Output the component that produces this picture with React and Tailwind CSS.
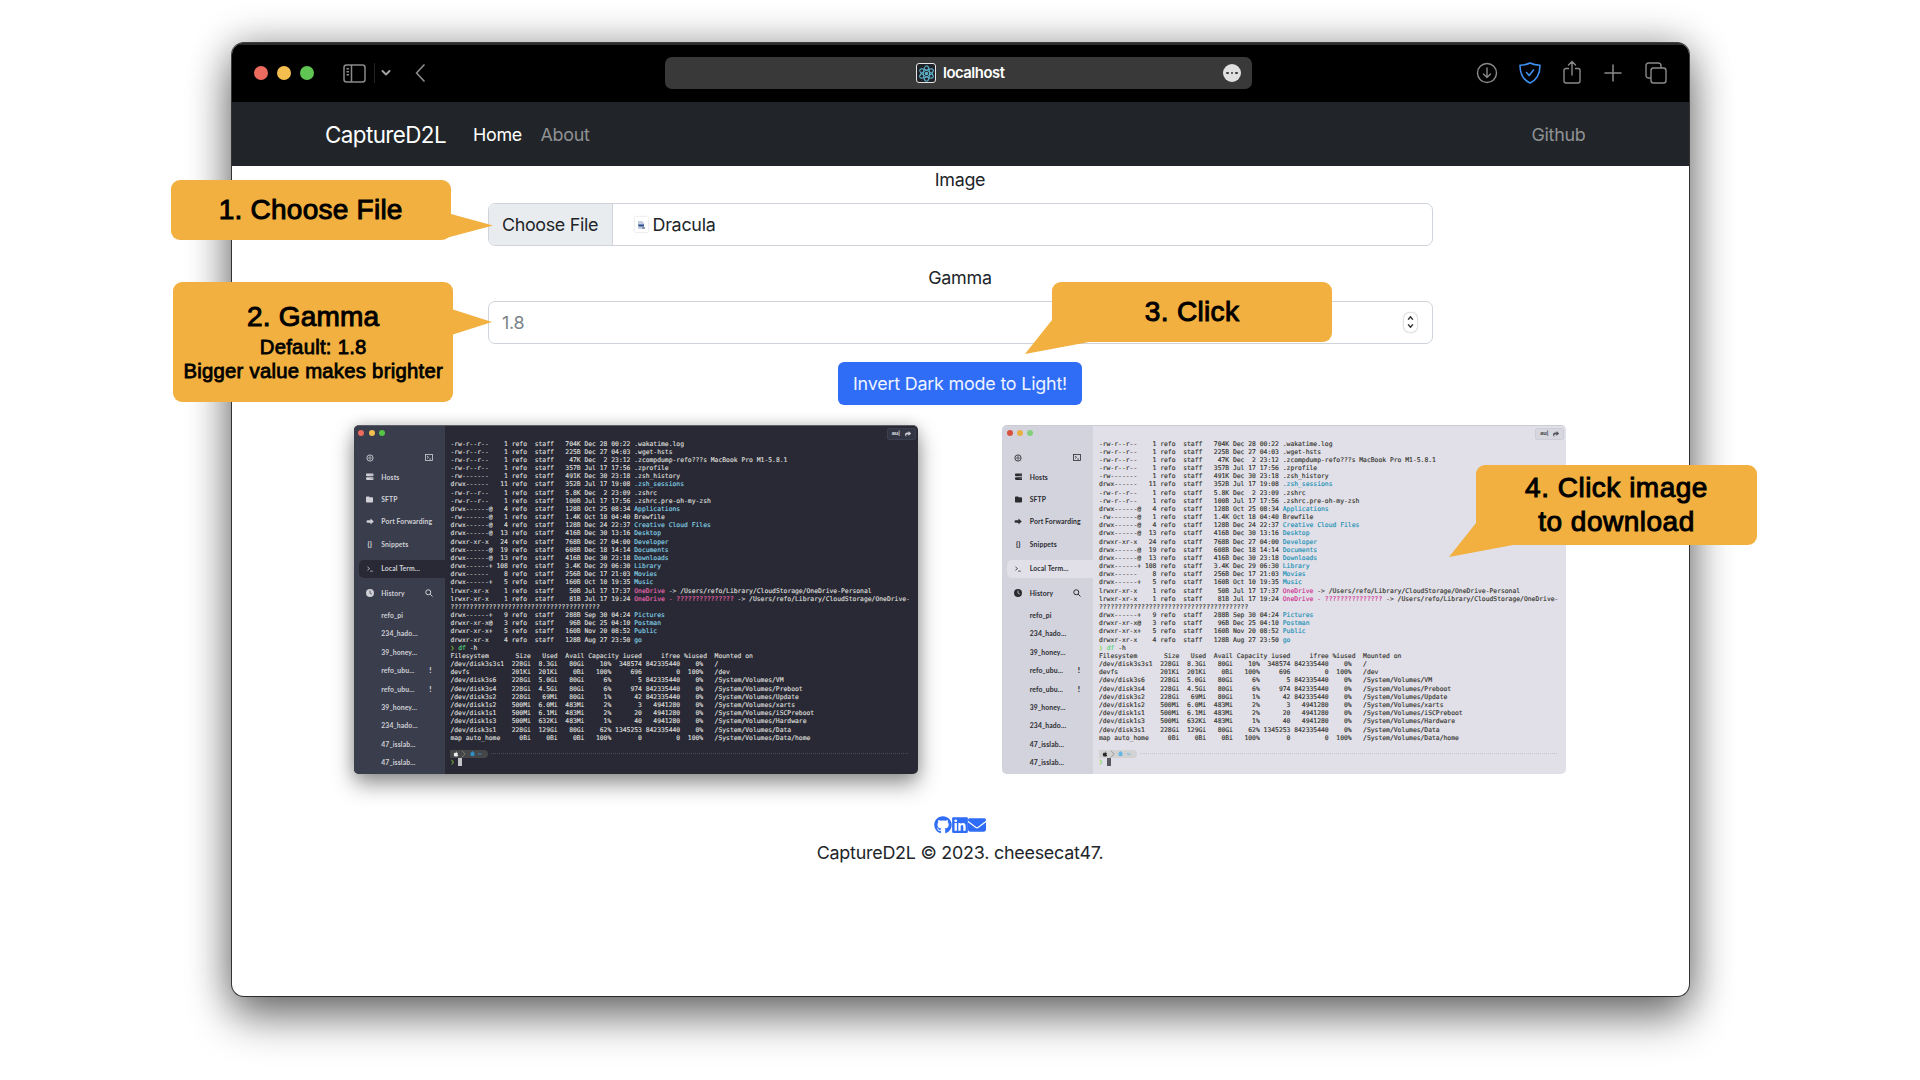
import React from "react";
import { FaGithub, FaLinkedin, FaEnvelope, FaApple, FaServer, FaFolder, FaShare, FaClock } from "react-icons/fa6";

const FILES = [
  ["-rw-r--r--    1 refo  staff   704K Dec 28 00:22 ", ".wakatime.log", "f"],
  ["-rw-r--r--    1 refo  staff   225B Dec 27 04:03 ", ".wget-hsts", "f"],
  ["-rw-r--r--    1 refo  staff    47K Dec  2 23:12 ", ".zcompdump-refo???s MacBook Pro M1-5.8.1", "f"],
  ["-rw-r--r--    1 refo  staff   357B Jul 17 17:56 ", ".zprofile", "f"],
  ["-rw-------    1 refo  staff   491K Dec 30 23:18 ", ".zsh_history", "f"],
  ["drwx------   11 refo  staff   352B Jul 17 19:08 ", ".zsh_sessions", "d"],
  ["-rw-r--r--    1 refo  staff   5.8K Dec  2 23:09 ", ".zshrc", "f"],
  ["-rw-r--r--    1 refo  staff   100B Jul 17 17:56 ", ".zshrc.pre-oh-my-zsh", "f"],
  ["drwx------@   4 refo  staff   128B Oct 25 08:34 ", "Applications", "d"],
  ["-rw-------@   1 refo  staff   1.4K Oct 18 04:40 ", "Brewfile", "f"],
  ["drwx------@   4 refo  staff   128B Dec 24 22:37 ", "Creative Cloud Files", "d"],
  ["drwx------@  13 refo  staff   416B Dec 30 13:16 ", "Desktop", "d"],
  ["drwxr-xr-x   24 refo  staff   768B Dec 27 04:00 ", "Developer", "d"],
  ["drwx------@  19 refo  staff   608B Dec 18 14:14 ", "Documents", "d"],
  ["drwx------@  13 refo  staff   416B Dec 30 23:18 ", "Downloads", "d"],
  ["drwx------+ 108 refo  staff   3.4K Dec 29 06:30 ", "Library", "d"],
  ["drwx------    8 refo  staff   256B Dec 17 21:03 ", "Movies", "d"],
  ["drwx------+   5 refo  staff   160B Oct 10 19:35 ", "Music", "d"],
  ["lrwxr-xr-x    1 refo  staff    50B Jul 17 17:37 ", "OneDrive", "l", " -> /Users/refo/Library/CloudStorage/OneDrive-Personal"],
  ["lrwxr-xr-x    1 refo  staff    81B Jul 17 19:24 ", "OneDrive - ???????????????", "l", " -> /Users/refo/Library/CloudStorage/OneDrive-"],
  ["???????????????????????????????????????", "", "f"],
  ["drwx------+   9 refo  staff   288B Sep 30 04:24 ", "Pictures", "d"],
  ["drwxr-xr-x@   3 refo  staff    96B Dec 25 04:10 ", "Postman", "d"],
  ["drwxr-xr-x+   5 refo  staff   160B Nov 20 08:52 ", "Public", "d"],
  ["drwxr-xr-x    4 refo  staff   128B Aug 27 23:50 ", "go", "d"],
];

const DISKS = [
  ["Filesystem", "Size", "Used", "Avail", "Capacity", "iused", "ifree", "%iused", "Mounted on"],
  ["/dev/disk3s3s1", "228Gi", "8.3Gi", "80Gi", "10%", "348574", "842335440", "0%", "/"],
  ["devfs", "201Ki", "201Ki", "0Bi", "100%", "696", "0", "100%", "/dev"],
  ["/dev/disk3s6", "228Gi", "5.0Gi", "80Gi", "6%", "5", "842335440", "0%", "/System/Volumes/VM"],
  ["/dev/disk3s4", "228Gi", "4.5Gi", "80Gi", "6%", "974", "842335440", "0%", "/System/Volumes/Preboot"],
  ["/dev/disk3s2", "228Gi", "69Mi", "80Gi", "1%", "42", "842335440", "0%", "/System/Volumes/Update"],
  ["/dev/disk1s2", "500Mi", "6.0Mi", "483Mi", "2%", "3", "4941280", "0%", "/System/Volumes/xarts"],
  ["/dev/disk1s1", "500Mi", "6.1Mi", "483Mi", "2%", "20", "4941280", "0%", "/System/Volumes/iSCPreboot"],
  ["/dev/disk1s3", "500Mi", "632Ki", "483Mi", "1%", "40", "4941280", "0%", "/System/Volumes/Hardware"],
  ["/dev/disk3s1", "228Gi", "129Gi", "80Gi", "62%", "1345253", "842335440", "0%", "/System/Volumes/Data"],
  ["map auto_home", "0Bi", "0Bi", "0Bi", "100%", "0", "0", "100%", "/System/Volumes/Data/home"],
];

function diskLine(row, i) {
  const [fs, size, used, avail, cap, iused, ifree, pct, mount] = row;
  const head = i === 0;
  const capCol = head ? " " + cap : cap.padStart(7);
  const pctCol = head ? " " + pct : pct.padStart(6) + " ";
  return (
    fs.padEnd(14) + size.padStart(7) + used.padStart(7) + avail.padStart(7) + capCol +
    iused.padStart(50 - 35 - capCol.length) + ifree.padStart(10) + pctCol + "  " + mount
  );
}

const DARK = {
  frame: "bg-[#282934] border-[#5b5c66] shadow-[0_10px_22px_rgba(0,0,0,0.42),0_0_14px_rgba(0,0,0,0.14)]",
  side: "bg-[#3a3d4c] text-[#cfd0d6]",
  active: "bg-[#282934]",
  text: "text-[#dcdcd8]",
  d: "text-[#84cfe2]",
  l: "text-[#e468b0]",
  f: "",
  cmd: "text-[#4fd07a]",
  arrow: "text-[#6fa83a]",
  pill: "bg-[#454648]",
  pillText: "text-[#2f8fc4]",
  apple: "text-[#eeeeee]",
  dots: "border-[#4a4b56]",
  cursor: "bg-[#c4c4c6]",
  badge: "bg-[#323543] border-[#3d4050] text-[#c9cad0]",
  lights: ["bg-[#ec6a5e]", "bg-[#f4bf4f]", "bg-[#56c446]"],
};

const LIGHT = {
  frame: "bg-[#e1e0e8] border-[#cccbd3]",
  side: "bg-[#d2d3dd] text-[#2c2c30]",
  active: "bg-[#e1e0e8]",
  text: "text-[#35352f]",
  d: "text-[#2090b4]",
  l: "text-[#cf2f93]",
  f: "",
  cmd: "text-[#58d67c]",
  arrow: "text-[#8fdc5c]",
  pill: "bg-[#d2d2d3]",
  pillText: "text-[#62b6e6]",
  apple: "text-[#2a2a2a]",
  dots: "border-[#c4c3cb]",
  cursor: "bg-[#58585c]",
  badge: "bg-[#d7d7e0] border-[#cdcdd8] text-[#55555c]",
  lights: ["bg-[#d9503f]", "bg-[#eaaf42]", "bg-[#83d07c]"],
};

function Gear() {
  return (
    <svg viewBox="0 0 16 16" className="size-[8px]" fill="none" stroke="currentColor">
      <circle cx="8" cy="8" r="6.2" strokeWidth="1.8" />
      <circle cx="8" cy="8" r="2.4" strokeWidth="1.5" />
    </svg>
  );
}

function SideItem({ icon, label, className = "" }) {
  return (
    <div className={"flex h-[22.4px] items-center pl-[12px] " + className}>
      <span className="flex w-[8px] justify-center">{icon}</span>
      <span className="ml-[7.5px]">{label}</span>
    </div>
  );
}

function HistoryItem({ label, warn }) {
  return (
    <div className="flex h-[18.4px] items-center justify-between pr-[13px] pl-[27.5px]">
      <span>{label}</span>
      {warn && <span className="text-[8px] font-black">!</span>}
    </div>
  );
}

function Terminal({ t }) {
  return (
    <div className={"flex h-[349px] w-[564px] overflow-hidden rounded-[5px] border-t " + t.frame}>
      <div className={"w-[91px] shrink-0 font-[Lato,sans-serif] text-[6.8px] leading-[9px] font-bold tracking-[0.02em] whitespace-nowrap " + t.side}>
        <div className="flex gap-[4.3px] pt-[4px] pl-[4.5px]">
          {t.lights.map((c) => <span key={c} className={"size-[6px] rounded-full " + c} />)}
        </div>
        <div className="mt-[17px] flex h-[10px] items-center justify-between pr-[12px] pl-[12px]">
          <Gear />
          <svg viewBox="0 0 16 14" className="h-[7px] w-[8px]" fill="none" stroke="currentColor" strokeWidth="1.6">
            <rect x="1" y="1" width="14" height="12" />
            <path d="M4 4l3 2.5L4 9M8.5 10h3.500" />
          </svg>
        </div>
        <SideItem className="mt-[3.4px]" icon={<FaServer className="size-[7.500px]" />} label="Hosts" />
        <SideItem icon={<FaFolder className="size-[7px]" />} label="SFTP" />
        <SideItem
          icon={
            <svg viewBox="0 0 16 14" className="h-[7px] w-[8px]" fill="currentColor">
              <path d="M9 1l6.500 6L9 13V9.500H3.500a2.500 2.500 0 0 1 0-5H9z" />
            </svg>
          }
          label="Port Forwarding"
        />
        <SideItem icon={<span className="text-[7px] font-black">{"{}"}</span>} label="Snippets" />
        <div className={"mt-[4.500px] ml-[5px] flex h-[18px] items-center rounded-l-[5px] pl-[7px] " + t.active}>
          <svg viewBox="0 0 16 14" className="h-[6px] w-[8px]" fill="none" stroke="currentColor" strokeWidth="1.8">
            <path d="M2 2l5 4-5 4M8.500 12h6" />
          </svg>
          <span className="ml-[7.500px]">Local Term...</span>
        </div>
        <div className="mt-[4px] flex h-[22.400px] items-center pl-[12px]">
          <FaClock className="size-[8px]" />
          <span className="ml-[7.500px]">History</span>
          <svg viewBox="0 0 16 16" className="mr-[12px] ml-auto size-[8px]" fill="none" stroke="currentColor" strokeWidth="2">
            <circle cx="6.500" cy="6.500" r="5" />
            <path d="M10.200 10.200L15 15" />
          </svg>
        </div>
        <div className="mt-[2px]">
          <HistoryItem label="refo_pi" />
          <HistoryItem label="234_hado..." />
          <HistoryItem label="39_honey..." />
          <HistoryItem label="refo_ubu..." warn />
          <HistoryItem label="refo_ubu..." warn />
          <HistoryItem label="39_honey..." />
          <HistoryItem label="234_hado..." />
          <HistoryItem label="47_isslab..." />
          <HistoryItem label="47_isslab..." />
        </div>
      </div>
      <div className={"relative flex-1 pt-[14px] pl-[5.700px] font-['DejaVu_Sans_Mono',monospace] text-[6.370px] leading-[8.178px] tracking-[0px] whitespace-pre [-webkit-text-stroke:0.150px_currentColor] " + t.text}>
        {FILES.map(([head, name, kind, tail], i) => (
          <div key={i} className="h-[8.178px]">
            {head}
            <span className={t[kind]}>{name}</span>
            {tail}
          </div>
        ))}
        <div className="h-[8.178px]">
          <span className={t.arrow}>❯</span> <span className={t.cmd}>df</span> -h
        </div>
        {DISKS.map((row, i) => <div key={i} className="h-[8.178px]">{diskLine(row, i)}</div>)}
        <div className="mt-[8px] flex h-[8px] items-center">
          <div className={"flex h-[8px] w-[38px] items-center rounded-r-[4px] pl-[3px] " + t.pill}>
            <FaApple className={"size-[6px] " + t.apple} />
            <svg viewBox="0 0 6 8" className="ml-[2px] h-[8px] w-[5px] opacity-60" fill="none" stroke="currentColor" strokeWidth="0.7">
              <path d="M1 0l4 4-4 4" />
            </svg>
            <span className={"ml-[3.500px] flex items-center gap-[3px] " + t.pillText}>
              <svg viewBox="0 0 8 8" className="size-[5px]" fill="currentColor"><path d="M4 0l4 4H7v4H1V4H0z" /></svg>
              <b>~</b>
            </span>
          </div>
          <div className={"ml-[3px] w-[417px] border-t border-dotted " + t.dots} />
        </div>
        <div className="flex h-[8.500px] items-center">
          <span className={t.arrow}>❯</span>
          <span className={"ml-[3.800px] h-[8px] w-[4px] " + t.cursor} />
        </div>
        <div className={"absolute top-[2px] right-[2px] flex h-[12px] w-[29px] items-center justify-center gap-[5px] rounded-[2px] border font-[Lato,sans-serif] text-[6px] font-black " + t.badge}>
          <span>au|</span>
          <FaShare className="size-[6px]" />
        </div>
      </div>
    </div>
  );
}

function Toolbar() {
  return (
    <div className="flex h-[59px] shrink-0 items-center border-t-2 border-[#2b2b2b] bg-black pb-px text-[#8a8a8a]">
      <div className="ml-[22.500px] flex gap-[9px]">
        <span className="size-[14px] rounded-full bg-[#ed6a5e]" />
        <span className="size-[14px] rounded-full bg-[#f5bf4f]" />
        <span className="size-[14px] rounded-full bg-[#61c554]" />
      </div>
      <svg viewBox="0 0 23 19" className="ml-[28.500px] h-[19px] w-[23px]" fill="none" stroke="currentColor" strokeWidth="1.500">
        <rect x="1" y="1" width="21" height="17" rx="2.500" />
        <path d="M8.500 1v17M3.500 4.700h2.500M3.500 7.700h2.500M3.500 10.700h2.500" />
      </svg>
      <span className="ml-[8px] h-[20px] w-px bg-[#242424]" />
      <svg viewBox="0 0 10 6" className="ml-[6.500px] h-[6px] w-[10px]" fill="none" stroke="#a5a5a5" strokeWidth="1.900" strokeLinecap="round" strokeLinejoin="round">
        <path d="M1.500 1l3.500 3.500L8.500 1" />
      </svg>
      <svg viewBox="0 0 10 18" className="ml-[24px] h-[18px] w-[10px]" fill="none" stroke="currentColor" strokeWidth="1.700" strokeLinecap="round" strokeLinejoin="round">
        <path d="M9 1L1.500 9 9 17" />
      </svg>
      <div className="ml-[240px] flex h-[32px] w-[587px] items-center rounded-[7px] bg-[#393939] pr-[11px] text-white">
        <span className="ml-[251px] flex size-[20px] items-center justify-center rounded-[3px] border-[1.500px] border-[#e6e6e6] bg-[#20232a]">
          <svg viewBox="0 0 20 20" className="size-[17px]" fill="none" stroke="#5fb4cc" strokeWidth="1.200">
            <ellipse cx="10" cy="10" rx="9" ry="3.500" transform="rotate(90 10 10)" />
            <ellipse cx="10" cy="10" rx="9" ry="3.500" transform="rotate(30 10 10)" />
            <ellipse cx="10" cy="10" rx="9" ry="3.500" transform="rotate(150 10 10)" />
            <circle cx="10" cy="10" r="1.400" fill="#5fb4cc" />
          </svg>
        </span>
        <span className="ml-[7px] pt-px text-[14.800px] font-semibold tracking-[-0.030em]">localhost</span>
        <span className="ml-auto flex size-[18px] items-center justify-center gap-[2px] rounded-full bg-[#e0e0e0]">
          <i className="size-[2.500px] rounded-full bg-[#393939]" />
          <i className="size-[2.500px] rounded-full bg-[#393939]" />
          <i className="size-[2.500px] rounded-full bg-[#393939]" />
        </span>
      </div>
      <svg viewBox="0 0 22 22" className="ml-[224px] size-[22px]" fill="none" stroke="currentColor" strokeWidth="1.400" strokeLinecap="round" strokeLinejoin="round">
        <circle cx="11" cy="11" r="9.500" />
        <path d="M11 6v9.500M7.500 12l3.500 3.500 3.500-3.500" />
      </svg>
      <svg viewBox="0 0 22 22" className="mb-px ml-[20.500px] size-[22px]" fill="none" stroke="#3f8ff0" strokeWidth="1.600" strokeLinecap="round" strokeLinejoin="round">
        <path d="M11 1c3 1.500 6.500 2.200 10 2.200 0 8.300-2.500 14.300-10 17.800C3.500 17.500 1 11.500 1 3.200 4.500 3.200 8 2.500 11 1z" />
        <path d="M7.500 10.500l2.700 3 4.300-5.500" />
      </svg>
      <svg viewBox="0 0 18 24" className="mb-[3px] ml-[22px] h-[24px] w-[18px]" fill="none" stroke="currentColor" strokeWidth="1.400" strokeLinecap="round" strokeLinejoin="round">
        <path d="M5.500 8.500H3a2 2 0 0 0-2 2V21a2 2 0 0 0 2 2h12a2 2 0 0 0 2-2V10.500a2 2 0 0 0-2-2h-2.500M9 15V1.500M5.500 5L9 1.500 12.500 5" />
      </svg>
      <svg viewBox="0 0 18 18" className="ml-[23px] size-[18px]" fill="none" stroke="currentColor" strokeWidth="1.500" strokeLinecap="round">
        <path d="M9 1v16M1 9h16" />
      </svg>
      <svg viewBox="0 0 22 22" className="mb-px ml-[23px] size-[22px]" fill="none" stroke="currentColor" strokeWidth="1.400" strokeLinejoin="round">
        <rect x="6" y="6" width="15" height="15" rx="2.500" />
        <path d="M6 16H3.500A2.500 2.500 0 0 1 1 13.500v-10A2.500 2.500 0 0 1 3.500 1h10A2.500 2.500 0 0 1 16 3.500V6" />
      </svg>
    </div>
  );
}

function Callout({ className, tail, children }) {
  return (
    <div className={"absolute flex flex-col items-center justify-center rounded-[9px] bg-[#f1b03f] text-[28px] leading-[34px] whitespace-nowrap text-black [-webkit-text-stroke:1px_black] font-['Liberation_Sans',Arial,sans-serif] " + className}>
      {tail}
      {children}
    </div>
  );
}

export default function App() {
  return (
    <div className="relative h-[1080px] w-[1920px] overflow-hidden bg-white pt-[43px] pl-[231.500px] font-[Inter,sans-serif] text-[17.900px] leading-[27px] tracking-[-0.015em] text-[#212529]">
      <div className="flex h-[953px] w-[1457px] flex-col overflow-hidden rounded-[12px] bg-white shadow-[0_0_0_1px_rgba(0,0,0,0.700),0_22px_44px_rgba(0,0,0,0.480),0_0_40px_rgba(0,0,0,0.320)]">
        <Toolbar />
        <nav className="flex h-[64px] shrink-0 items-center bg-[#212529] pr-[103px] pl-[93.500px]">
          <span className="text-[22.400px] tracking-[-0.026em] text-white">CaptureD2L</span>
          <span className="ml-[27px] text-white">Home</span>
          <span className="ml-[18.500px] text-[#909294]">About</span>
          <span className="ml-auto text-[#909294]">Github</span>
        </nav>
        <main className="flex flex-col items-center">
          <label>Image</label>
          <div className="mt-[10px] flex h-[43px] w-[945px] overflow-hidden rounded-[7px] border border-[#ced4da]">
            <span className="flex w-[124px] items-center justify-center border-r border-[#ced4da] bg-[#e9ecef] tracking-[-0.018em]">Choose File</span>
            <span className="ml-[22px] flex items-center gap-[5px]">
              <span className="flex h-[15px] w-[13px] items-center justify-center bg-white shadow-[0_0_2px_rgba(0,0,0,0.200)]">
                <svg viewBox="0 0 8 8" className="size-[8px]"><path d="M1 0h4l2 2v6H1z" fill="#c3cddd" /><path d="M1 3.500h6v2H2z" fill="#2c4f8c" /><path d="M5 6h3v2H5z" fill="#8d99ab" /></svg>
              </span>
              Dracula
            </span>
          </div>
          <label className="mt-[18px]">Gamma</label>
          <div className="mt-[9.500px] flex h-[43px] w-[945px] items-center justify-between rounded-[7px] border border-[#ced4da] pr-[15px] pl-[13.500px] text-[#7b838a]">
            <span>1.8</span>
            <span className="flex h-[19px] w-[13px] flex-col items-center justify-center gap-[4px] rounded-[5px] shadow-[0_0_2px_rgba(0,0,0,0.450)]">
              <svg viewBox="0 0 8 5" className="h-[4px] w-[7px]" fill="none" stroke="#333" strokeWidth="1.800"><path d="M1 4.500L4 1l3 3.500" /></svg>
              <svg viewBox="0 0 8 5" className="h-[4px] w-[7px]" fill="none" stroke="#333" strokeWidth="1.800"><path d="M1 .5L4 4 7 .5" /></svg>
            </span>
          </div>
          <button className="mt-[18.500px] h-[43px] w-[244px] rounded-[6px] bg-[#2f6df6] tracking-[-0.011em] text-[#eef3ff]">Invert Dark mode to Light!</button>
          <div className="mt-[19.500px] flex gap-[84.500px]">
            <Terminal t={DARK} />
            <Terminal t={LIGHT} />
          </div>
          <footer className="mt-[42px] flex flex-col items-center">
            <div className="flex h-[18px] items-center text-[#2f6df6]">
              <FaGithub className="size-[18px]" />
              <FaLinkedin className="h-[18px] w-[16px]" />
              <FaEnvelope className="size-[18px]" />
            </div>
            <p className="mt-[5px] tracking-[-0.013em]">CaptureD2L © 2023. cheesecat47.</p>
          </footer>
        </main>
      </div>

      <Callout
        className="top-[179.500px] left-[170.700px] h-[60px] w-[280px] tracking-[0.250px]"
        tail={<svg viewBox="0 0 50 26" className="absolute top-[33px] left-[272px] h-[26px] w-[50px]" fill="#f1b03f"><path d="M0 0l8 1 42 11.500L3 25z" /></svg>}
      >
        <span>1. Choose File</span>
      </Callout>
      <Callout
        className="top-[281.500px] left-[173.200px] h-[120px] w-[280px] tracking-[0.200px]"
        tail={<svg viewBox="0 0 42 26" className="absolute top-[27px] left-[278px] h-[26px] w-[42px]" fill="#f1b03f"><path d="M0 0l2 .5L41 13 2 25.500z" /></svg>}
      >
        <span>2. Gamma</span>
        <span className="mt-px text-[20.300px] leading-[24.500px] tracking-[0.260px] [-webkit-text-stroke:0.800px_black]">Default: 1.8</span>
        <span className="text-[20.300px] leading-[24.500px] tracking-[0.260px] [-webkit-text-stroke:0.800px_black]">Bigger value makes brighter</span>
      </Callout>
      <Callout
        className="top-[281.500px] left-[1052px] h-[60px] w-[280px] tracking-[0.350px]"
        tail={<svg viewBox="0 0 66 38" className="absolute top-[35px] left-[-28px] h-[38px] w-[66px]" fill="#f1b03f"><path d="M28 3L1 37l64-12V0z" /></svg>}
      >
        <span>3. Click</span>
      </Callout>
      <Callout
        className="top-[464.500px] left-[1476px] h-[80px] w-[281px] tracking-[0.500px]"
        tail={<svg viewBox="0 0 66 38" className="absolute top-[55px] left-[-28px] h-[38px] w-[66px]" fill="#f1b03f"><path d="M28 3L1 37l64-12V0z" /></svg>}
      >
        <span>4. Click image</span>
        <span>to download</span>
      </Callout>
    </div>
  );
}
